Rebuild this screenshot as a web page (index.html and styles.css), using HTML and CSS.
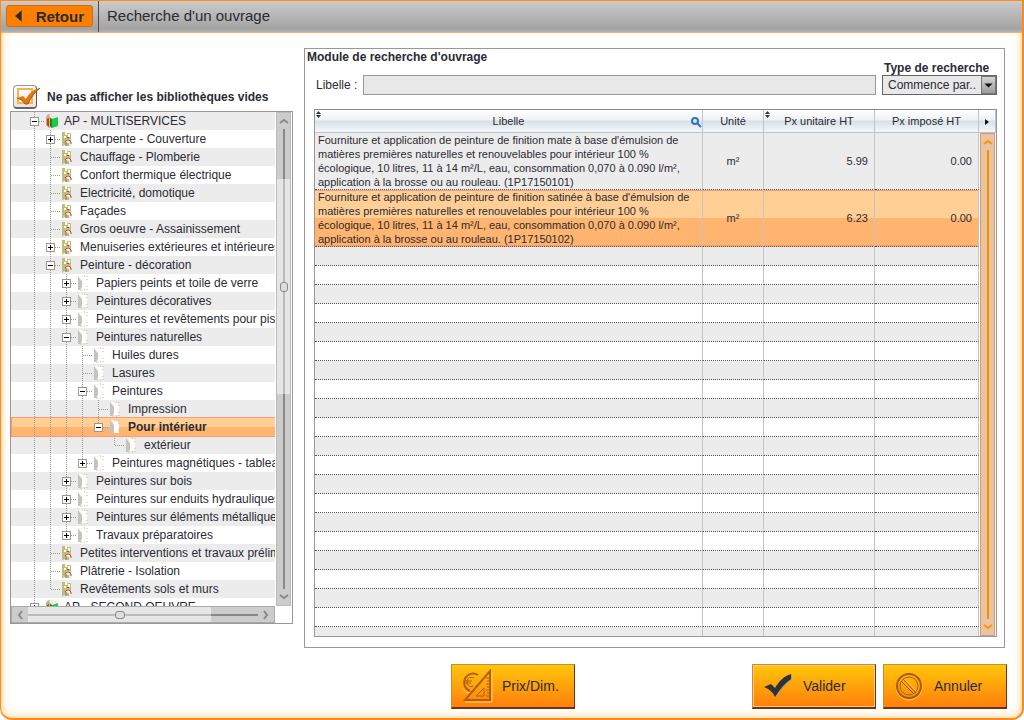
FILE: index.html
```html
<!DOCTYPE html>
<html lang="fr">
<head>
  <meta charset="UTF-8" />
  <meta name="viewport" content="width=device-width, initial-scale=1.0"/>
  <title>Recherche d'un ouvrage</title>
  <link rel="stylesheet" href="styles.css">
</head>
<body>
  <!-- shared icons -->
  <svg class="defs" aria-hidden="true">
    <symbol id="i-lot" viewBox="0 0 12 16">
      <path d="M1 1h3l2 1h4v13H6l-3-1-2 2z" fill="#bcbe7c"/>
      <path d="M4 1h2v3H4zM7 3h2v3H7zM3 5h2v2H3z" fill="#fffbea"/>
      <path d="M4 15v-4l2-3h2l2 3v4H8v-3H6v3z" fill="#f6e6dc"/>
      <path d="M4 11l2-2h2l2 2v2" stroke="#c0392f" fill="none"/>
      <path d="M5 11v4" stroke="#55503a"/>
      <path d="M6 6h2v1H6z" fill="#c0392f"/>
    </symbol>
    <symbol id="i-dir" viewBox="0 0 12 16">
      <path d="M4 2h5l1 3v9H5z" fill="#fffdf8"/>
      <path d="M1 1l2 3 2 2v6l-2 3H1z" fill="#c3c3c3"/>
      <path d="M2 1h3l1 4-2-1z" fill="#fff6e6"/>
      <path d="M7 1h1M10 1v1M10 4v1M10 11v1M7 15h1M10 14v1" stroke="#b9b9b9" fill="none"/>
      <path d="M3 15h2" stroke="#c6c890"/>
    </symbol>
    <symbol id="i-books" viewBox="0 0 14 16">
      <path d="M1 4l2-3 3 1v12l-2 1-3-3z" fill="#b9b08f"/>
      <path d="M2 6l2-1v9l-2-2z" fill="#e0301e"/>
      <path d="M4 4l1-1v12l-1-1z" fill="#f3b52f"/>
      <path d="M4 3l2-2 6 1v2l-6 1z" fill="#e4ece0"/>
      <path d="M5 5l2 1 6-2v9l-6 2-2-2z" fill="#22c648"/>
      <path d="M5 5l2 1v9l-2-2z" fill="#0d8a31"/>
    </symbol>
    <symbol id="i-sort" viewBox="0 0 5 7">
      <path d="M0 3l2.500-3L5 3zM0 4h5L2.500 7z" fill="#333"/>
    </symbol>
    <symbol id="i-chevron" viewBox="0 0 10 6">
      <path d="M1 5l4-3 4 3" fill="none" stroke="currentColor" stroke-width="2"/>
    </symbol>
  </svg>

  <div class="window">
    <header class="topbar">
      <button class="back" type="button">
        <svg viewBox="0 0 8 12"><path d="M7 0v12L0 6z" fill="#2b2b2b"/></svg>Retour
      </button>
      <h1>Recherche d'un ouvrage</h1>
    </header>

    <main>
      <section class="library">
        <label class="check" for="hideEmpty">
          <input type="checkbox" id="hideEmpty" checked>
          <svg viewBox="0 0 28 26"><path d="M5 5h14v14H5z" fill="none" stroke="#f7b34f" stroke-width="2"/><path d="M4 14l6-2 3 3c3-6 8-10 14-11-5 4-9 9-12 16h-3c-2-3-4-5-8-6z" fill="#e27a0a"/><path d="M4 14c4 1 6 3 8 6h3c3-7 7-12 12-16" fill="none" stroke="#a9560a"/></svg>
          <span>Ne pas afficher les bibliothèques vides</span>
        </label>

        <div class="tree-box">
          <div class="tree-view">
            <ul class="tree">
              <li>
                <div class="node"><button class="toggle open" aria-label="Réduire"></button><svg class="books"><use href="#i-books"/></svg>AP - MULTISERVICES</div>
                <ul>
                  <li><div class="node"><button class="toggle" aria-label="Développer"></button><svg><use href="#i-lot"/></svg>Charpente - Couverture</div></li>
                  <li><div class="node leaf"><svg><use href="#i-lot"/></svg>Chauffage - Plomberie</div></li>
                  <li><div class="node leaf"><svg><use href="#i-lot"/></svg>Confort thermique électrique</div></li>
                  <li><div class="node leaf"><svg><use href="#i-lot"/></svg>Electricité, domotique</div></li>
                  <li><div class="node leaf"><svg><use href="#i-lot"/></svg>Façades</div></li>
                  <li><div class="node leaf"><svg><use href="#i-lot"/></svg>Gros oeuvre - Assainissement</div></li>
                  <li><div class="node"><button class="toggle" aria-label="Développer"></button><svg><use href="#i-lot"/></svg>Menuiseries extérieures et intérieures</div></li>
                  <li>
                    <div class="node"><button class="toggle open" aria-label="Réduire"></button><svg><use href="#i-lot"/></svg>Peinture - décoration</div>
                    <ul>
                      <li><div class="node"><button class="toggle" aria-label="Développer"></button><svg><use href="#i-dir"/></svg>Papiers peints et toile de verre</div></li>
                      <li><div class="node"><button class="toggle" aria-label="Développer"></button><svg><use href="#i-dir"/></svg>Peintures décoratives</div></li>
                      <li><div class="node"><button class="toggle" aria-label="Développer"></button><svg><use href="#i-dir"/></svg>Peintures et revêtements pour piscines</div></li>
                      <li>
                        <div class="node"><button class="toggle open" aria-label="Réduire"></button><svg><use href="#i-dir"/></svg>Peintures naturelles</div>
                        <ul>
                          <li><div class="node leaf"><svg><use href="#i-dir"/></svg>Huiles dures</div></li>
                          <li><div class="node leaf"><svg><use href="#i-dir"/></svg>Lasures</div></li>
                          <li>
                            <div class="node"><button class="toggle open" aria-label="Réduire"></button><svg><use href="#i-dir"/></svg>Peintures</div>
                            <ul>
                              <li><div class="node leaf"><svg><use href="#i-dir"/></svg>Impression</div></li>
                              <li>
                                <div class="node selected"><button class="toggle open" aria-label="Réduire"></button><svg><use href="#i-dir"/></svg>Pour intérieur</div>
                                <ul>
                                  <li><div class="node leaf"><svg><use href="#i-dir"/></svg>extérieur</div></li>
                                </ul>
                              </li>
                            </ul>
                          </li>
                          <li><div class="node"><button class="toggle" aria-label="Développer"></button><svg><use href="#i-dir"/></svg>Peintures magnétiques - tableaux</div></li>
                        </ul>
                      </li>
                      <li><div class="node"><button class="toggle" aria-label="Développer"></button><svg><use href="#i-dir"/></svg>Peintures sur bois</div></li>
                      <li><div class="node"><button class="toggle" aria-label="Développer"></button><svg><use href="#i-dir"/></svg>Peintures sur enduits hydrauliques</div></li>
                      <li><div class="node"><button class="toggle" aria-label="Développer"></button><svg><use href="#i-dir"/></svg>Peintures sur éléments métalliques</div></li>
                      <li><div class="node"><button class="toggle" aria-label="Développer"></button><svg><use href="#i-dir"/></svg>Travaux préparatoires</div></li>
                    </ul>
                  </li>
                  <li><div class="node leaf"><svg><use href="#i-lot"/></svg>Petites interventions et travaux préliminaires</div></li>
                  <li><div class="node leaf"><svg><use href="#i-lot"/></svg>Plâtrerie - Isolation</div></li>
                  <li><div class="node leaf"><svg><use href="#i-lot"/></svg>Revêtements sols et murs</div></li>
                </ul>
              </li>
              <li><div class="node"><button class="toggle" aria-label="Développer"></button><svg class="books"><use href="#i-books"/></svg>AP - SECOND OEUVRE</div></li>
            </ul>
          </div>
          <div class="vscroll">
            <svg><use href="#i-chevron"/></svg>
            <div class="before"></div>
            <div class="thumb"><i></i></div>
            <div class="after"></div>
            <svg class="down"><use href="#i-chevron"/></svg>
          </div>
          <div class="hscroll">
            <svg class="left"><use href="#i-chevron"/></svg>
            <div class="thumb"><i></i></div>
            <div class="after"></div>
            <svg class="right"><use href="#i-chevron"/></svg>
          </div>
        </div>
      </section>

      <section class="search">
        <h2>Module de recherche d'ouvrage</h2>
        <div class="filters">
          <label for="libelle">Libelle :</label>
          <input type="text" id="libelle">
          <div class="type">
            <label for="type">Type de recherche</label>
            <select id="type"><option>Commence par..</option></select>
            <svg viewBox="0 0 16 18"><path d="M3 7h10l-5 5z" fill="#111"/></svg>
          </div>
        </div>

        <div class="grid">
          <div class="table-view">
            <table>
              <colgroup><col><col class="c-unit"><col class="c-price"><col class="c-imposed"></colgroup>
              <thead>
                <tr>
                  <th><svg class="sort"><use href="#i-sort"/></svg>Libelle<svg class="loupe" viewBox="0 0 11 11"><circle cx="4" cy="4" r="3" fill="none" stroke="#2b78c0" stroke-width="2"/><path d="M6 6l4 4" stroke="#2b78c0" stroke-width="2"/></svg></th>
                  <th>Unité</th>
                  <th><svg class="sort"><use href="#i-sort"/></svg>Px unitaire HT</th>
                  <th>Px imposé HT</th>
                </tr>
              </thead>
              <tbody>
                <tr class="item">
                  <td>Fourniture et application de peinture de finition mate à base d'émulsion de<br>matières premières naturelles et renouvelables pour intérieur 100 %<br>écologique, 10 litres, 11 à 14 m²/L, eau, consommation 0,070 à 0.090 l/m²,<br>application à la brosse ou au rouleau. (1P17150101)</td>
                  <td>m²</td><td>5.99</td><td>0.00</td>
                </tr>
                <tr class="item selected">
                  <td>Fourniture et application de peinture de finition satinée à base d'émulsion de<br>matières premières naturelles et renouvelables pour intérieur 100 %<br>écologique, 10 litres, 11 à 14 m²/L, eau, consommation 0,070 à 0.090 l/m²,<br>application à la brosse ou au rouleau. (1P17150102)</td>
                  <td>m²</td><td>6.23</td><td>0.00</td>
                </tr>
                <tr><td></td><td></td><td></td><td></td></tr>
                <tr><td></td><td></td><td></td><td></td></tr>
                <tr><td></td><td></td><td></td><td></td></tr>
                <tr><td></td><td></td><td></td><td></td></tr>
                <tr><td></td><td></td><td></td><td></td></tr>
                <tr><td></td><td></td><td></td><td></td></tr>
                <tr><td></td><td></td><td></td><td></td></tr>
                <tr><td></td><td></td><td></td><td></td></tr>
                <tr><td></td><td></td><td></td><td></td></tr>
                <tr><td></td><td></td><td></td><td></td></tr>
                <tr><td></td><td></td><td></td><td></td></tr>
                <tr><td></td><td></td><td></td><td></td></tr>
                <tr><td></td><td></td><td></td><td></td></tr>
                <tr><td></td><td></td><td></td><td></td></tr>
                <tr><td></td><td></td><td></td><td></td></tr>
                <tr><td></td><td></td><td></td><td></td></tr>
                <tr><td></td><td></td><td></td><td></td></tr>
                <tr><td></td><td></td><td></td><td></td></tr>
                <tr><td></td><td></td><td></td><td></td></tr>
                <tr><td></td><td></td><td></td><td></td></tr>
                <tr><td></td><td></td><td></td><td></td></tr>
              </tbody>
            </table>
          </div>
          <div class="side">
            <button class="more" type="button" aria-label="Colonnes"><svg viewBox="0 0 4 6"><path d="M0 0v6l4-3z" fill="#111"/></svg></button>
            <div class="oscroll">
              <svg><use href="#i-chevron"/></svg>
              <div class="track"></div>
              <svg class="down"><use href="#i-chevron"/></svg>
            </div>
          </div>
        </div>
      </section>
    </main>

    <footer>
      <button class="action price" type="button">
        <svg viewBox="0 0 34 34">
          <g fill="none" stroke="#fbd36a"><path d="M2 19c3 5 7 5 9 5M5 33h27V3"/></g>
          <g fill="none" stroke="#b35f08">
            <path d="M18 6a9 9 0 1 0-8 16" stroke-width="2"/>
            <path d="M14 9c-5-2-7 1-7 4s3 6 6 4M5 12h7M5 14h6"/>
            <path d="M30 2v29H5z" stroke-width="2"/><path d="M24 19v8h-8z"/>
            <path d="M26 9h4M27 12h3M26 15h4M27 18h3M26 21h4M27 24h3M26 27h4"/>
          </g>
        </svg>
        <span>Prix/Dim.</span>
      </button>
      <button class="action ok" type="button">
        <svg viewBox="0 0 34 34"><path d="M4 18l6-2 4 4c4-7 9-12 17-15v6c-6 4-11 10-16 18-3-6-6-9-11-11z" fill="#c9a05a"/><path d="M3 18l7-3 4 4C18 12 23 7 30 5v5C24 14 19 20 14 28c-2-5-6-8-11-10z" fill="#2f3138"/></svg>
        <span>Valider</span>
      </button>
      <button class="action cancel" type="button">
        <svg viewBox="0 0 34 34"><g fill="none" stroke="#ffcf5a"><circle cx="17" cy="18" r="13"/><path d="M12 9l14 15"/></g><g fill="none" stroke="#a85a0a"><circle cx="17" cy="17" r="12" stroke-width="2"/><circle cx="17" cy="17" r="9"/><path d="M11 10l13 14M9 12l13 13"/></g></svg>
        <span>Annuler</span>
      </button>
    </footer>
  </div>
</body>
</html>
```
FILE: styles.css
```css
:root {
  --orange: #ff8a1c;
  --text: #2b2b33;
  --line: #989898;
  --stripe: #ececec;
  --dots: #999;
}

* {
  box-sizing: border-box;
  margin: 0;
  padding: 0;
}

body {
  font-family: "Liberation Sans", Arial, sans-serif;
  font-size: 12px;
  color: var(--text);
  background: #fff;
}

button,
input,
select {
  font: inherit;
  color: inherit;
}

.defs {
  display: none;
}

.window {
  display: flex;
  flex-direction: column;
  height: 100vh;
  min-height: 480px;
  border: 2px solid var(--orange);
  border-top-width: 1px;
  border-left-width: 1px;
  border-radius: 0 0 12px 12px;
  box-shadow: inset 0 0 8px #ffc870;
  overflow: hidden;
}

/* top bar */
.topbar {
  display: flex;
  flex: none;
  height: 32px;
  background: linear-gradient(#cbcbcb, #a3a3a3 28px, #b4b4b4);
  border-bottom: 1px solid #ffb163;
}

.back {
  display: flex;
  align-items: center;
  gap: 13px;
  width: 87px;
  height: 22px;
  margin: 4px 5px 0;
  padding: 0 8px;
  font-size: 15px;
  font-weight: bold;
  background: #ff8000;
  border: 1px solid #d8680a;
  border-radius: 3px;
}

.back svg {
  width: 8px;
  height: 12px;
}

h1 {
  padding-left: 8px;
  font-size: 15px;
  line-height: 30px;
  font-weight: normal;
  border-left: 1px solid #55454d;
}

main {
  display: flex;
  flex: 1;
  gap: 11px;
  min-height: 0;
  padding: 15px 17px 0 9px;
}

/* library tree */
.library {
  display: flex;
  flex-direction: column;
  width: 283px;
  padding: 35px 0 24px;
}

.check {
  display: grid;
  grid-template-columns: 34px 1fr;
  align-items: center;
  height: 28px;
  padding-left: 3px;
  font-weight: bold;
}

.check input {
  grid-area: 1 / 1;
  width: 24px;
  height: 24px;
  appearance: none;
  background: linear-gradient(#fff, #e4e4e4);
  border: 1px solid #999;
  border-right-color: #555;
  border-bottom: 2px solid #666;
  border-radius: 4px;
}

.check svg {
  grid-area: 1 / 1;
  width: 28px;
  height: 26px;
  pointer-events: none;
}

.tree-box {
  display: grid;
  grid-template: 1fr 17px / 1fr 17px;
  flex: 1;
  min-height: 0;
  border: 1px solid var(--line);
}

.tree-view {
  min-height: 0;
  overflow: hidden;
}

.tree {
  position: relative;
  z-index: 0;
  padding-left: 15px;
  background: repeating-linear-gradient(var(--stripe) 0 18px, #fff 18px 36px);
}

.tree ul {
  padding-left: 16px;
}

.tree li {
  list-style: none;
  background: repeating-linear-gradient(var(--dots) 0 1px, transparent 1px 2px) 8px 0 / 1px 100% no-repeat;
}

.tree ul > li:last-child {
  background-size: 1px 10px;
}

.node {
  display: flex;
  align-items: center;
  height: 18px;
  padding-left: 4px;
  white-space: nowrap;
  background: repeating-linear-gradient(90deg, var(--dots) 0 1px, transparent 1px 2px) 9px 9px / 9px 1px no-repeat;
}

.node svg {
  flex: none;
  width: 12px;
  height: 16px;
  margin: 0 7px 0 6px;
}

.node svg.books {
  width: 14px;
  margin: 0 5px 0 6px;
}

.leaf {
  padding-left: 13px;
}

.toggle {
  flex: none;
  width: 9px;
  height: 9px;
  background:
    linear-gradient(#000, #000) center / 5px 1px no-repeat,
    linear-gradient(#000, #000) center / 1px 5px no-repeat,
    #fff;
  border: 1px solid #9a9788;
}

.toggle.open {
  background: linear-gradient(#000, #000) center / 5px 1px no-repeat, #fff;
}

.node.selected {
  font-weight: bold;
}

.node.selected::before {
  content: "";
  position: absolute;
  z-index: -1;
  left: 0;
  right: 0;
  height: 18px;
  background: linear-gradient(#ffcf96 50%, #ffb56f 50%);
  border: 1px solid #ff9a70;
  border-right: 0;
}

/* grey scrollbars */
.vscroll,
.hscroll {
  display: flex;
  align-items: center;
  color: #888;
  background: #ccc;
}

.vscroll {
  flex-direction: column;
  width: 15px;
  margin-left: 1px;
  border: 1px solid #bbb;
}

.hscroll {
  border: 1px solid #aaa;
}

.vscroll svg,
.hscroll svg,
.oscroll svg {
  flex: none;
  width: 10px;
  height: 6px;
  margin: 5px 0;
}

.down {
  transform: rotate(180deg);
}

.hscroll .left {
  transform: rotate(-90deg);
}

.hscroll .right {
  transform: rotate(90deg);
}

.hscroll svg {
  margin: 0 3px;
}

.vscroll .before,
.vscroll .after {
  flex: 50;
  width: 100%;
  background: linear-gradient(#888, #888) center / 2px 100% no-repeat;
}

.vscroll .after {
  flex: 195;
}

.vscroll .thumb,
.hscroll .thumb {
  display: flex;
  align-items: center;
  justify-content: center;
}

.vscroll .thumb {
  flex: 215;
  width: 100%;
  background: linear-gradient(#bbb, #bbb) center / 2px 100% no-repeat, #e6e6e6;
}

.hscroll .thumb {
  flex: 183;
  height: 100%;
  background: linear-gradient(#bbb, #bbb) center / 100% 2px no-repeat, #e6e6e6;
}

.hscroll .after {
  flex: 47;
  height: 2px;
  background: #888;
}

.thumb i {
  width: 8px;
  height: 10px;
  background: #ddd;
  border: 1px solid #888;
  border-radius: 3px;
}

.hscroll .thumb i {
  width: 10px;
  height: 8px;
}

/* search module */
.search {
  display: flex;
  flex-direction: column;
  flex: 1;
  min-width: 0;
  padding: 0 7px 10px 9px;
  border: 1px solid var(--line);
}

h2 {
  margin-left: -7px;
  font-size: 12px;
  line-height: 16px;
}

.filters {
  display: flex;
  align-items: flex-end;
  padding: 0 0 14px 2px;
}

.filters > label {
  width: 47px;
  line-height: 20px;
}

.filters input {
  flex: 1;
  min-width: 0;
  height: 20px;
  margin-right: 6px;
  background: #e8e8e8;
  border: 1px solid var(--line);
}

.type {
  display: grid;
  grid-template: 14px 20px / 1fr 16px;
  width: 115px;
  margin-top: -4px;
}

.type label {
  grid-column: 1 / 3;
  padding-left: 2px;
  font-weight: bold;
  line-height: 14px;
}

.type select {
  grid-area: 2 / 1 / 3 / 3;
  padding-left: 5px;
  appearance: none;
  background: #e8e8e8;
  border: 1px solid #666;
  border-radius: 0;
}

.type svg {
  grid-area: 2 / 2;
  width: 15px;
  height: 18px;
  margin-top: 1px;
  background: linear-gradient(#d4d4d4, #9c9c9c);
  border: 1px solid #777;
  pointer-events: none;
}

.grid {
  display: flex;
  flex: 1;
  min-height: 0;
  border: 1px solid var(--line);
  border-top-color: #858990;
}

.table-view {
  flex: 1;
  min-width: 0;
  overflow: hidden;
}

table {
  width: 100%;
  table-layout: fixed;
  border-collapse: separate;
  border-spacing: 0;
  font-size: 11px;
}

.c-unit {
  width: 61px;
}

.c-price {
  width: 111px;
}

.c-imposed {
  width: 104px;
}

th,
.more {
  background: linear-gradient(#fff, #eef2f5 45%, #d9e1e7 50%, #f3f7fa);
  border-right: 1px solid #b9c6d0;
  border-bottom: 1px solid #b4c3cf;
}

th {
  position: relative;
  height: 23px;
  font-weight: normal;
}

.sort {
  position: absolute;
  top: 1px;
  left: 1px;
  width: 5px;
  height: 7px;
}

.loupe {
  position: absolute;
  top: 7px;
  right: 0;
  width: 11px;
  height: 11px;
}

td {
  height: 19px;
  border-right: 1px solid #c4c4c4;
  border-bottom: 1px dotted #555;
}

tbody tr:nth-child(odd) {
  background: var(--stripe);
}

.item td {
  height: 57px;
  padding: 0 6px 0 3px;
  line-height: 14px;
  text-align: right;
  white-space: nowrap;
}

.item td:nth-child(1) {
  text-align: left;
}

.item td:nth-child(2) {
  padding: 0;
  text-align: center;
}

tbody tr.selected {
  background: linear-gradient(#ffcf96 50%, #ffb56f 50%);
}

.item.selected td {
  box-shadow: inset 0 1px #ff9a70, inset 0 -1px #ff9a70;
}

.side {
  display: flex;
  flex-direction: column;
  width: 17px;
}

.more {
  height: 23px;
  border-top: 0;
  border-left: 0;
}

.more svg {
  width: 4px;
  height: 6px;
}

.oscroll {
  display: flex;
  flex: 1;
  flex-direction: column;
  align-items: center;
  width: 15px;
  margin-left: 1px;
  color: #ff9000;
  background: #e8c5a0;
  border: 1px solid #dc9678;
}

.track {
  flex: 1;
  width: 2px;
  background: #f29100;
}

/* bottom buttons */
footer {
  display: flex;
  justify-content: flex-end;
  gap: 7px;
  padding: 16px 15px 9px;
}

.action {
  display: flex;
  align-items: center;
  gap: 8px;
  width: 124px;
  height: 45px;
  padding-left: 8px;
  font-size: 14px;
  background: linear-gradient(#ffc60a, #ff7f0c);
  border: 1px solid #c98a3a;
  border-right-color: #6b3510;
  border-bottom: 2px solid #6b3510;
}

.action svg {
  width: 34px;
  height: 34px;
}

.price {
  margin-right: 170px;
}

.ok {
  box-shadow: inset 0 0 0 1px #ffc97a;
}
```
